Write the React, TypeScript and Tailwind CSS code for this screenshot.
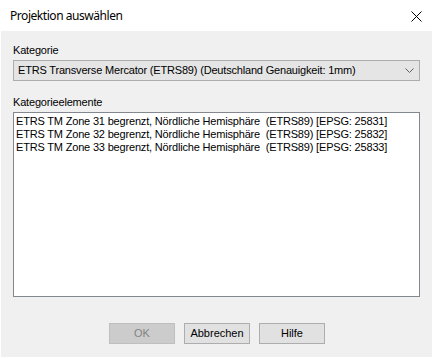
import { useState } from "react";

const items = [
    "ETRS TM Zone 31 begrenzt, Nördliche Hemisphäre  (ETRS89) [EPSG: 25831]",
    "ETRS TM Zone 32 begrenzt, Nördliche Hemisphäre  (ETRS89) [EPSG: 25832]",
    "ETRS TM Zone 33 begrenzt, Nördliche Hemisphäre  (ETRS89) [EPSG: 25833]",
];

const font = "font-['Liberation_Sans',Arial,sans-serif]";

function DialogButton({ label, disabled }: { label: string; disabled?: boolean }) {
    return (
        <button
            disabled={disabled}
            className={
                disabled
                    ? "w-[66px] h-[21px] border border-[#bfbfbf] bg-[#cccccc] text-[#838383] text-[11px] leading-[13px]"
                    : "w-[66px] h-[21px] border border-[#adadad] bg-[#e1e1e1] text-black text-[11px] leading-[13px]"
            }
        >
            {label}
        </button>
    );
}

export default function App() {
    const [selected] = useState<number | null>(null);

    return (
        <div className={`w-[433px] h-[359px] bg-white px-px pb-[2px] flex flex-col ${font}`}>
            {/* title bar */}
            <div className="h-[31px] flex items-center justify-between pl-[9px] pr-[10px]">
                <span className="font-['Noto_Sans',sans-serif] text-[12px] text-black tracking-[-0.45px]">
                    Projektion auswählen
                </span>
                <svg width="11" height="11" viewBox="0 0 11 11" className="mt-[1px]">
                    <path d="M0.5 0.5 L10.5 10.5 M10.5 0.5 L0.5 10.5" stroke="#000" strokeWidth="1" fill="none" />
                </svg>
            </div>

            {/* body */}
            <div className="flex-1 bg-[#f0f0f0] px-3 pt-[13px] pb-[13px] flex flex-col text-[11px] leading-[13px] tracking-[-0.18px] text-black">
                <div className="h-[13px]">Kategorie</div>
                <div className="mt-[3px] h-[21px] border border-[#adadad] bg-[#e5e5e5] flex items-center justify-between pl-1 pr-[4px]">
                    <span>ETRS Transverse Mercator (ETRS89) (Deutschland Genauigkeit: 1mm)</span>
                    <svg width="9" height="5" viewBox="0 0 9 5" className="mr-[1px]">
                        <path d="M0.5 0.5 L4.5 4.5 L8.5 0.5" stroke="#606060" strokeWidth="1" fill="none" />
                    </svg>
                </div>

                <div className="mt-[15px] h-[13px]">Kategorieelemente</div>
                <div className="mt-[3px] h-[185px] border border-[#828790] bg-white pl-[2px] pt-[2px]">
                    {items.map((item, i) => (
                        <div key={i} className={`h-[13px] whitespace-pre ${selected === i ? "bg-[#0078d7] text-white" : ""}`}>
                            {item}
                        </div>
                    ))}
                </div>

                <div className="mt-[26px] flex justify-center gap-[9px] pl-[1px] tracking-normal">
                    <DialogButton label="OK" disabled />
                    <DialogButton label="Abbrechen" />
                    <DialogButton label="Hilfe" />
                </div>
            </div>
        </div>
    );
}
